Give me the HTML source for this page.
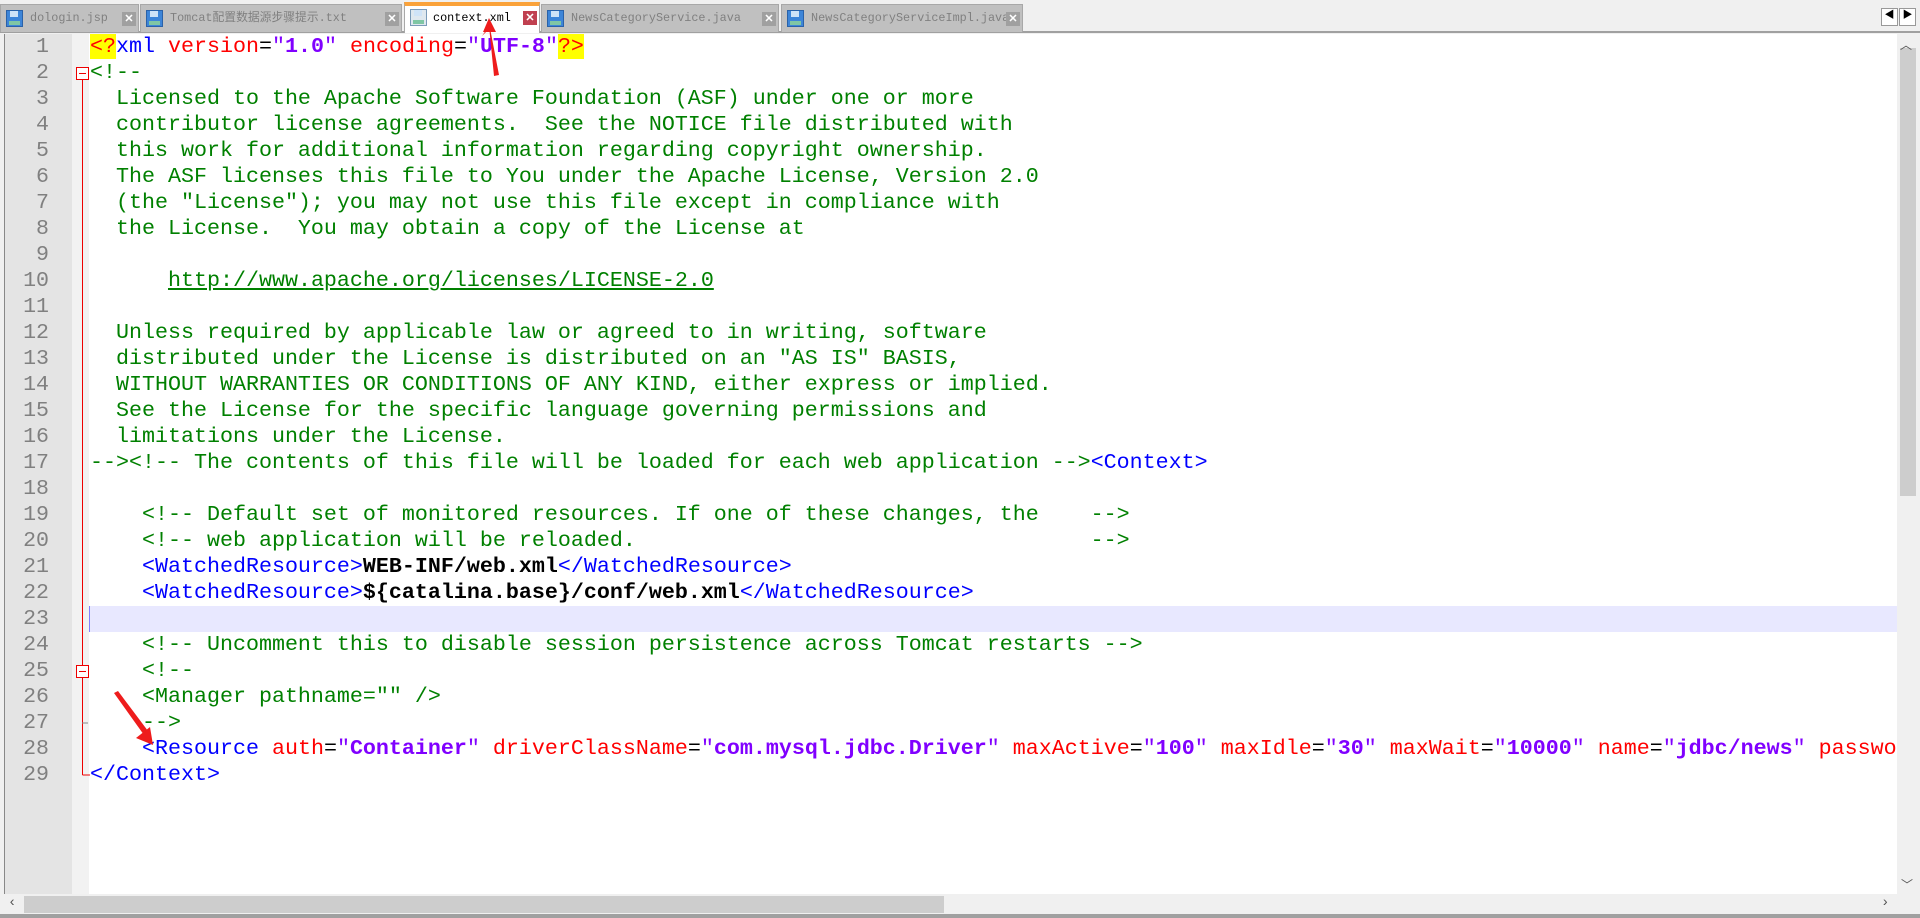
<!DOCTYPE html>
<html><head><meta charset="utf-8"><style>
*{margin:0;padding:0;box-sizing:border-box}
body{width:1920px;height:918px;background:#f0f0f0;position:relative;overflow:hidden;font-family:"Liberation Mono","Noto Sans CJK SC",monospace}
#tabs{position:absolute;left:0;top:0;width:1920px;height:33px;background:#f0f0f0;border-bottom:2px solid #a0a0a0}
.tab{position:absolute;top:4px;height:28px;background:#c0c0c0;border:1px solid #a8a8a8;border-bottom:none;font-size:11.8px;color:#808080;line-height:26px;white-space:nowrap}
.tab.act{background:#fff;color:#000;top:2px;height:31px;border-top:4px solid #faa23a;line-height:24px}
.ic{position:absolute;left:5px;top:5px;width:17px;height:17px;background:#3d85d8;border:1px solid #2a62a8}
.ic:before{content:"";position:absolute;left:3px;top:0;width:8px;height:6px;background:#cfe3f7}
.ic:after{content:"";position:absolute;left:2px;bottom:1px;width:11px;height:4px;background:#7fc6a4}
.tab.act .ic{top:3px;background:#dfe8ef;border-color:#7a9ab8}
.x{position:absolute;right:2px;top:7px;width:14px;height:14px;background:#a0a0a0;color:#fff;font-size:11px;line-height:14px;text-align:center;font-weight:bold;font-family:"Liberation Sans",sans-serif}
.tab.act .x{background:#c04050;top:5px}
.tt{position:absolute;left:29px}
#ed{position:absolute;left:4px;top:34px;width:1893px;height:860px;background:#fff;overflow:hidden;border-left:1px solid #888}
#gut{position:absolute;left:0;top:0;width:67px;height:860px;background:#e4e4e4}
#fold{position:absolute;left:67px;top:0;width:17px;height:860px;background:#f2f2f2}
.ln{position:absolute;left:0;width:44px;text-align:right;color:#808080;font-size:21.6px;height:26px;line-height:26px}
.l{position:absolute;left:85px;height:26px;line-height:26px;font-size:21.67px;white-space:pre;color:#000}
.c{color:#008000}.t{color:#0000ff}.a{color:#ff0000}.v{color:#8000ff;font-weight:bold}.b{font-weight:bold}
.y{background:#ffff00;color:#ff0000}
.u{text-decoration:underline}
#hl{position:absolute;left:84px;top:572px;width:1830px;height:26px;background:#e8e8ff;border-left:1px solid #8080ff}
#vs{position:absolute;left:1897px;top:34px;width:21px;height:860px;background:#f0f0f0}
#vt{position:absolute;left:1900px;top:48px;width:16px;height:448px;background:#cdcdcd}
#hs{position:absolute;left:4px;top:894px;width:1893px;height:20px;background:#f0f0f0}
#ht{position:absolute;left:24px;top:896px;width:920px;height:17px;background:#cdcdcd}
</style></head><body>
<div id="tabs">
<div class="tab" style="left:0;width:139px"><i class="ic"></i><span class="tt">dologin.jsp</span><span class="x">✕</span></div>
<div class="tab" style="left:140px;width:262px"><i class="ic"></i><span class="tt">Tomcat配置数据源步骤提示.txt</span><span class="x">✕</span></div>
<div class="tab act" style="left:404px;width:136px"><i class="ic"></i><span class="tt" style="left:28px">context.xml</span><span class="x">✕</span></div>
<div class="tab" style="left:541px;width:238px"><i class="ic"></i><span class="tt">NewsCategoryService.java</span><span class="x">✕</span></div>
<div class="tab" style="left:781px;width:242px"><i class="ic"></i><span class="tt">NewsCategoryServiceImpl.java</span><span class="x">✕</span></div>
<div style="position:absolute;left:1881px;top:8px;width:17px;height:18px;background:#fff;border:1px solid #999;font-size:10px;line-height:16px;text-align:center">◀</div>
<div style="position:absolute;left:1899px;top:8px;width:17px;height:18px;background:#fff;border:1px solid #999;font-size:10px;line-height:16px;text-align:center">▶</div>
</div>
<div id="ed">
<div id="gut"></div><div id="fold"></div>
<div id="hl"></div>
<div class="ln" style="top:0">1</div><div class="ln" style="top:26px">2</div><div class="ln" style="top:52px">3</div><div class="ln" style="top:78px">4</div><div class="ln" style="top:104px">5</div><div class="ln" style="top:130px">6</div><div class="ln" style="top:156px">7</div><div class="ln" style="top:182px">8</div><div class="ln" style="top:208px">9</div><div class="ln" style="top:234px">10</div><div class="ln" style="top:260px">11</div><div class="ln" style="top:286px">12</div><div class="ln" style="top:312px">13</div><div class="ln" style="top:338px">14</div><div class="ln" style="top:364px">15</div><div class="ln" style="top:390px">16</div><div class="ln" style="top:416px">17</div><div class="ln" style="top:442px">18</div><div class="ln" style="top:468px">19</div><div class="ln" style="top:494px">20</div><div class="ln" style="top:520px">21</div><div class="ln" style="top:546px">22</div><div class="ln" style="top:572px">23</div><div class="ln" style="top:598px">24</div><div class="ln" style="top:624px">25</div><div class="ln" style="top:650px">26</div><div class="ln" style="top:676px">27</div><div class="ln" style="top:702px">28</div><div class="ln" style="top:728px">29</div>
<svg style="position:absolute;left:0;top:0" width="90" height="860">
<rect x="71.5" y="33.5" width="12" height="12" fill="#fff" stroke="#e00" /><line x1="74" y1="39.5" x2="81" y2="39.5" stroke="#e00"/>
<line x1="77.5" y1="46" x2="77.5" y2="741" stroke="#e00"/><line x1="77.5" y1="741" x2="85" y2="741" stroke="#e00"/>
<rect x="71.5" y="631.5" width="12" height="12" fill="#fff" stroke="#e00" /><line x1="74" y1="637.5" x2="81" y2="637.5" stroke="#e00"/>
<line x1="77" y1="689" x2="83" y2="689" stroke="#888"/>
</svg>
<div class="l" style="top:0"><span class="y">&lt;?</span><span class="t">xml</span> <span class="a">version</span>=<span class="v" style="font-weight:normal">"</span><span class="v">1.0</span><span class="v" style="font-weight:normal">"</span> <span class="a">encoding</span>=<span class="v" style="font-weight:normal">"</span><span class="v">UTF-8</span><span class="v" style="font-weight:normal">"</span><span class="y">?&gt;</span></div>
<div class="l c" style="top:26px">&lt;!--</div>
<div class="l c" style="top:52px">  Licensed to the Apache Software Foundation (ASF) under one or more</div>
<div class="l c" style="top:78px">  contributor license agreements.  See the NOTICE file distributed with</div>
<div class="l c" style="top:104px">  this work for additional information regarding copyright ownership.</div>
<div class="l c" style="top:130px">  The ASF licenses this file to You under the Apache License, Version 2.0</div>
<div class="l c" style="top:156px">  (the "License"); you may not use this file except in compliance with</div>
<div class="l c" style="top:182px">  the License.  You may obtain a copy of the License at</div>
<div class="l c" style="top:234px">      <span class="u">http://www.apache.org/licenses/LICENSE-2.0</span></div>
<div class="l c" style="top:286px">  Unless required by applicable law or agreed to in writing, software</div>
<div class="l c" style="top:312px">  distributed under the License is distributed on an "AS IS" BASIS,</div>
<div class="l c" style="top:338px">  WITHOUT WARRANTIES OR CONDITIONS OF ANY KIND, either express or implied.</div>
<div class="l c" style="top:364px">  See the License for the specific language governing permissions and</div>
<div class="l c" style="top:390px">  limitations under the License.</div>
<div class="l c" style="top:416px">--&gt;&lt;!-- The contents of this file will be loaded for each web application --&gt;<span class="t">&lt;Context&gt;</span></div>
<div class="l c" style="top:468px">    &lt;!-- Default set of monitored resources. If one of these changes, the    --&gt;</div>
<div class="l c" style="top:494px">    &lt;!-- web application will be reloaded.                                   --&gt;</div>
<div class="l" style="top:520px">    <span class="t">&lt;WatchedResource&gt;</span><span class="b">WEB-INF/web.xml</span><span class="t">&lt;/WatchedResource&gt;</span></div>
<div class="l" style="top:546px">    <span class="t">&lt;WatchedResource&gt;</span><span class="b">${catalina.base}/conf/web.xml</span><span class="t">&lt;/WatchedResource&gt;</span></div>
<div class="l c" style="top:598px">    &lt;!-- Uncomment this to disable session persistence across Tomcat restarts --&gt;</div>
<div class="l c" style="top:624px">    &lt;!--</div>
<div class="l c" style="top:650px">    &lt;Manager pathname="" /&gt;</div>
<div class="l c" style="top:676px">    --&gt;</div>
<div class="l" style="top:702px">    <span class="t">&lt;Resource</span> <span class="a">auth</span>=<span class="v" style="font-weight:normal">"</span><span class="v">Container</span><span class="v" style="font-weight:normal">"</span> <span class="a">driverClassName</span>=<span class="v" style="font-weight:normal">"</span><span class="v">com.mysql.jdbc.Driver</span><span class="v" style="font-weight:normal">"</span> <span class="a">maxActive</span>=<span class="v" style="font-weight:normal">"</span><span class="v">100</span><span class="v" style="font-weight:normal">"</span> <span class="a">maxIdle</span>=<span class="v" style="font-weight:normal">"</span><span class="v">30</span><span class="v" style="font-weight:normal">"</span> <span class="a">maxWait</span>=<span class="v" style="font-weight:normal">"</span><span class="v">10000</span><span class="v" style="font-weight:normal">"</span> <span class="a">name</span>=<span class="v" style="font-weight:normal">"</span><span class="v">jdbc/news</span><span class="v" style="font-weight:normal">"</span> <span class="a">password</span></div>
<div class="l t" style="top:728px">&lt;/Context&gt;</div>
</div>
<div id="vs"></div><div id="vt"></div>
<div style="position:absolute;left:1900px;top:36px;font-size:12px;color:#555">︿</div>
<div style="position:absolute;left:1901px;top:876px;font-size:12px;color:#555">﹀</div>
<div id="hs"></div><div id="ht"></div>
<div style="position:absolute;left:8px;top:895px;font-size:14px;color:#555">‹</div>
<div style="position:absolute;left:1881px;top:895px;font-size:14px;color:#555">›</div>
<div style="position:absolute;left:0;top:914px;width:1920px;height:4px;background:#a0a0a0"></div>
<svg style="position:absolute;left:0;top:0" width="1920" height="918">
<polygon points="494,76 489,26 482,36 490,28 499,75" fill="#ee1c1c"/>
<polygon points="483,32 489,18 496,32" fill="#ee1c1c"/>
<polygon points="114,693 144,735 148,731 118,691" fill="#ee1c1c"/>
<polygon points="136,738 153,745 150,727" fill="#ee1c1c"/>
</svg>
</body></html>
